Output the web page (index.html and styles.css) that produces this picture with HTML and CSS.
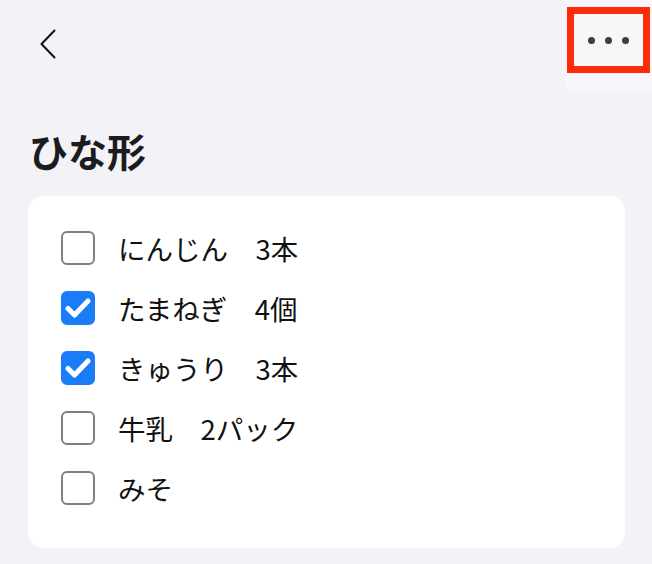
FILE: index.html
```html
<!DOCTYPE html>
<html lang="ja">
<head>
<meta charset="utf-8">
<link rel="stylesheet" href="styles.css">
</head>
<body>
<header class="nav">
  <button class="back" aria-label="戻る">
    <svg width="18" height="30" viewBox="0 0 18 30"><path d="M15.5 1.5 L2.5 15 L15.5 28.5" fill="none" stroke="#111" stroke-width="2" stroke-linecap="round" stroke-linejoin="round"/></svg>
  </button>
  <div class="menu-area">
    <button class="menu" aria-label="メニュー"><span class="dot"></span><span class="dot"></span><span class="dot"></span></button>
  </div>
</header>
<h1 class="title">ひな形</h1>
<section class="card">
  <label class="row"><span class="box"></span><span class="text">にんじん　3本</span></label>
  <label class="row"><span class="box checked"><svg width="26" height="22" viewBox="0 0 26 22"><path d="M3 11.5 L9.5 18 L23 4" fill="none" stroke="#fff" stroke-width="5" stroke-linecap="round" stroke-linejoin="round"/></svg></span><span class="text">たまねぎ　4個</span></label>
  <label class="row"><span class="box checked"><svg width="26" height="22" viewBox="0 0 26 22"><path d="M3 11.5 L9.5 18 L23 4" fill="none" stroke="#fff" stroke-width="5" stroke-linecap="round" stroke-linejoin="round"/></svg></span><span class="text">きゅうり　3本</span></label>
  <label class="row"><span class="box"></span><span class="text">牛乳　2パック</span></label>
  <label class="row"><span class="box"></span><span class="text">みそ</span></label>
</section>
</body>
</html>
```
FILE: styles.css
```css
* { box-sizing: border-box; }
html, body { margin: 0; padding: 0; }
body {
  background: #f2f2f7;
  font-family: "Noto Sans CJK JP", "Noto Sans", sans-serif;
  color: #111;
  width: 652px;
  height: 564px;
  overflow: hidden;
}
.nav {
  display: flex;
  justify-content: space-between;
  align-items: flex-start;
  height: 90px;
}
.back {
  margin: 29px 0 0 39px;
  padding: 0;
  border: 0;
  background: none;
  width: 18px;
  height: 30px;
  display: block;
}
.back svg { display: block; }
.menu-area {
  width: 86px;
  height: 90px;
  background: #f6f6f8;
  padding: 7px 2px 0 1px;
}
.menu {
  width: 83px;
  height: 66px;
  border: 7px solid #fe2a0c;
  background: #f7f7f7;
  padding: 0;
  display: flex;
  align-items: center;
  justify-content: center;
  gap: 10px;
}
.dot {
  width: 7px;
  height: 7px;
  border-radius: 50%;
  background: #3f3f3f;
}
.title {
  margin: 35px 0 0 29px;
  font-size: 39px;
  line-height: 50px;
  font-weight: 700;
  color: #1c1c1e;
}
.card {
  margin: 21px 27px 0 28px;
  background: #fff;
  border-radius: 16px;
  padding: 22px 33px 30px;
}
.row {
  display: flex;
  align-items: center;
  height: 60px;
  gap: 23px;
}
.box {
  width: 34px;
  height: 34px;
  border: 2.5px solid #808080;
  border-radius: 6px;
  display: flex;
  align-items: center;
  justify-content: center;
  flex: none;
}
.box.checked {
  background: #1a7cf6;
  border-color: #1a7cf6;
}
.box svg { display: block; }
.text {
  font-size: 27.5px;
  line-height: 36px;
  color: #111;
}
```
